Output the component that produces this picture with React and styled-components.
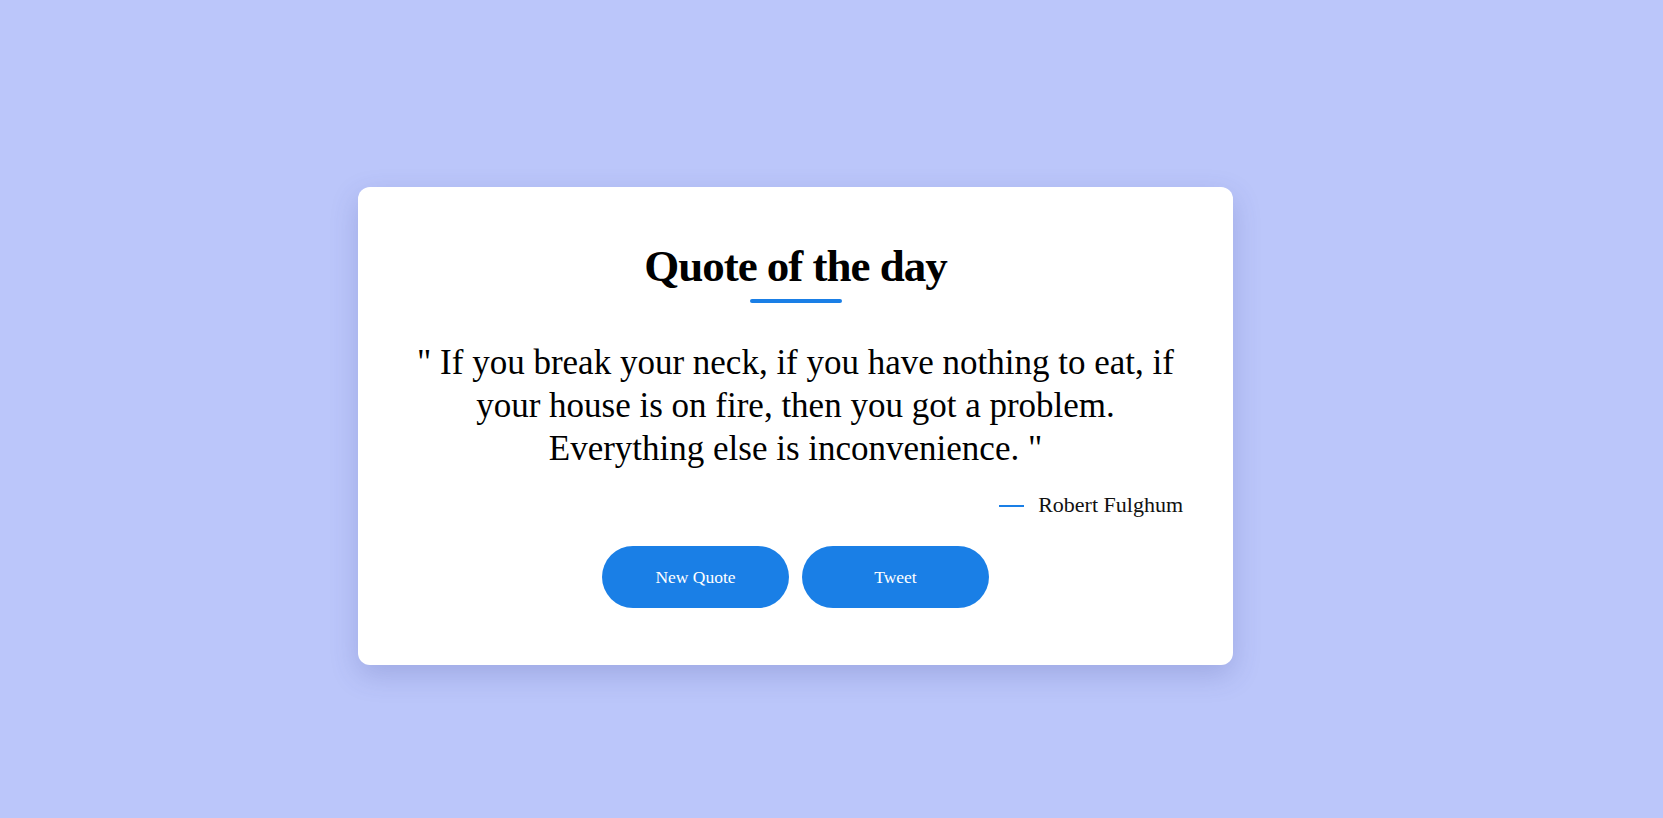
import React from "react";
import styled, { createGlobalStyle } from "styled-components";

const GlobalStyle = createGlobalStyle`
  html, body {
    margin: 0;
    padding: 0;
    background: #bbc6fa;
  }
  body {
    font-family: "Liberation Serif", "DejaVu Serif", serif;
  }
`;

const Page = styled.main`
  min-height: 100vh;
  box-sizing: border-box;
  padding: 187px 0 0 358px;
  display: flex;
  align-items: flex-start;
`;

const Card = styled.section`
  width: 875px;
  box-sizing: border-box;
  background: #ffffff;
  border-radius: 12px;
  padding: 52px 50px 57px;
  box-shadow: 0 10px 28px rgba(60, 70, 150, 0.22);
  display: flex;
  flex-direction: column;
  align-items: center;
`;

const Title = styled.h1`
  margin: 0;
  font-family: "Liberation Serif", serif;
  font-weight: 700;
  font-size: 45px;
  line-height: 54px;
  letter-spacing: -1px;
  color: #000;
  text-align: center;
`;

const Underline = styled.div`
  width: 92px;
  height: 4px;
  border-radius: 2px;
  background: #1a7fe6;
  margin-top: 6px;
`;

const QuoteText = styled.p`
  margin: 38px 0 0;
  font-size: 35px;
  line-height: 43px;
  color: #000;
  text-align: center;
  max-width: 775px;
  white-space: nowrap;
`;

const Author = styled.div`
  align-self: flex-end;
  margin-top: 21px;
  display: flex;
  align-items: center;
  gap: 14px;
  font-size: 22px;
  line-height: 28px;
  color: #111;
`;

const Dash = styled.span`
  display: inline-block;
  width: 25px;
  height: 2px;
  background: #1a7fe6;
  margin-top: 1px;
`;

const Buttons = styled.div`
  margin-top: 27px;
  display: flex;
  gap: 13px;
`;

const Button = styled.button`
  width: 187px;
  height: 62px;
  border: none;
  border-radius: 31px;
  background: #1a7fe6;
  color: #fff;
  font-family: "Liberation Serif", serif;
  font-size: 17.5px;
  cursor: pointer;
`;

export default function App() {
  return (
    <>
      <GlobalStyle />
      <Page>
        <Card>
          <Title>Quote of the day</Title>
          <Underline />
          <QuoteText>
            " If you break your neck, if you have nothing to eat, if
            <br />
            your house is on fire, then you got a problem.
            <br />
            Everything else is inconvenience. "
          </QuoteText>
          <Author>
            <Dash />
            <span>Robert Fulghum</span>
          </Author>
          <Buttons>
            <Button>New Quote</Button>
            <Button>Tweet</Button>
          </Buttons>
        </Card>
      </Page>
    </>
  );
}
